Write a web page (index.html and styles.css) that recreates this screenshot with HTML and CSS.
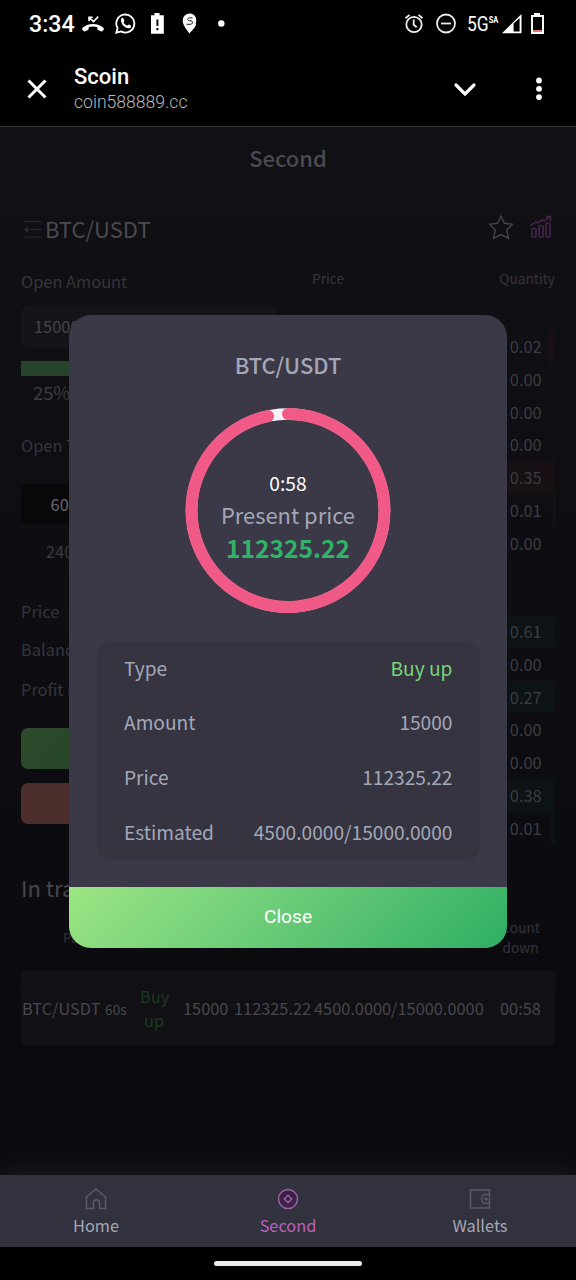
FILE: index.html
```html
<!DOCTYPE html>
<html lang="en">
<head>
<meta charset="utf-8">
<title>Scoin</title>
<link rel="stylesheet" href="styles.css">
</head>
<body>
<div class="phone">
  <header class="status">
    <span class="clock">3:34</span>
    <svg class="status-icons" width="150" height="30" viewBox="80 8 150 30">
      <path d="M82.500 30c-.6-1-.4-1.800.4-2.500 5.800-4.600 14.400-4.600 20.200 0 .8.700 1 1.500.4 2.500l-1.300 1.300c-.6.500-3.700-.8-4.600-1.500l-.4-2.600c-2.700-.9-5.700-.9-8.400 0l-.4 2.600c-.9.700-4 2-4.600 1.500z" fill="#fff"/>
      <path d="M89 21v-3.700h3.700M89.300 17.600l4.200 4 4.700-5" fill="none" stroke="#fff" stroke-width="1.600"/>
      <path d="M116.300 32.700l1.300-4.500a9 9 0 1 1 3.300 3.200z" fill="none" stroke="#fff" stroke-width="1.800"/>
      <path d="M121.500 18.300c.8-.700 1.600-.600 2 .2l.900 2c.2.600-.9 1.500-.8 1.900.7 1.400 1.900 2.500 3.400 3.100.6.200 1.200-1.300 1.800-1l2 1c.6.400.3 1.800-.4 2.300-3.600 2.600-11.600-4.500-8.900-9.500z" fill="#fff"/>
      <path d="M151 15.200h3.500V13h5v2.200h4.300v18.500H151z" fill="#fff"/>
      <path d="M157.400 19.500v6.500M157.400 28v2.300" stroke="#000" stroke-width="1.900"/>
      <path d="M189.300 33.700c-1.600-3.700-6.500-7.500-6.500-13 0-4.300 3.200-7.200 6.800-7.200 3.700 0 6.600 2.600 6.600 6.200v3h-2l2 .9c0 3.500-5 7.700-6.900 10.100z" fill="#fff"/>
      <path d="M192.500 17.800h-3c-2.300 0-2.400 3 0 3h1.500c2 0 2 3.500-.5 3.500h-4" fill="none" stroke="#000" stroke-width=".9"/>
      <circle cx="221.300" cy="23.500" r="3.200" fill="#fff"/>
    </svg>
    <span class="spring"></span>
    <svg width="54" height="26" viewBox="403 11 54 26" fill="none" stroke="#eee" stroke-width="1.800">
      <circle cx="414" cy="24.500" r="7.700"/><path d="M413.700 19.500v5.300l3 2.500M405.500 18.300l4-3.400M422.500 18.300l-4-3.400"/>
      <circle cx="446" cy="23.500" r="9"/><path d="M441 23.500h10"/>
    </svg>
    <span class="net">5G<sup>SA</sup></span>
    <svg width="44" height="26" viewBox="501 11 44 26">
      <path d="M502 33.200L521.500 14v19.200z" fill="#fff"/><path d="M513.600 23.500l6-5.500v13.500h-6z" fill="#000"/>
      <path d="M531 15h3v-2h6v2h4v19h-13z" fill="#fff"/><path d="M533 17h9v13h-9z" fill="#000"/><path d="M533 30h9v2h-9z" fill="#e8786c"/>
    </svg>
  </header>

  <header class="browser">
    <svg class="close-x" width="22" height="22" viewBox="0 0 22 22"><path d="M2.500 2.500l17 17m0-17l-17 17" stroke="#fff" stroke-width="3"/></svg>
    <div class="site"><b>Scoin</b><span>coin588889.cc</span></div>
    <svg width="24" height="16" viewBox="0 0 24 16"><path d="M3 4l9 9 9-9" fill="none" stroke="#fff" stroke-width="3.200" stroke-linecap="round"/></svg>
    <svg class="dots" width="8" height="24" viewBox="0 0 8 24" fill="#fff"><circle cx="4" cy="3.500" r="2.900"/><circle cx="4" cy="11.800" r="2.900"/><circle cx="4" cy="20.100" r="2.900"/></svg>
  </header>

  <main class="page">
    <h1>Second</h1>
    <div class="pair">
      <svg width="22" height="20" viewBox="0 0 22 20" fill="none" stroke="#33203a"><path d="M1 2.500h18M6 10.500h13M1 18h18"/><path d="M4.500 7.500L1.500 10.500l3 3z" fill="#33203a"/></svg>
      <span>BTC/USDT</span>
      <svg class="star" width="28" height="26" viewBox="0 0 28 26"><path d="M14 2l3.400 7.300 8 1-5.700 5.700 1.700 8.200-7.400-3.600-7.400 3.600 1.700-8.200-5.700-5.700 8-1z" fill="none" stroke="#444349" stroke-width="1.400"/></svg>
      <svg width="24" height="26" viewBox="0 0 24 26" fill="none" stroke="#432449" stroke-width="1.700"><rect x="3" y="14.500" width="4" height="8.500" rx="1"/><rect x="10" y="11.500" width="4" height="11.500" rx="1"/><rect x="17" y="9" width="4" height="14" rx="1"/><path d="M1.500 11.500l5-3.300 3 .5 3.800-3 2 1.300 5.500-4.500M17 2.500h4.500V7"/></svg>
    </div>

    <div class="trade">
      <section class="order">
        <p class="label first">Open Amount</p>
        <div class="field">15000</div>
        <div class="meter"></div>
        <div class="percent">25%</div>
        <p class="label time">Open Time</p>
        <div class="option chosen">60s</div>
        <div class="option">240s</div>
        <p class="label price">Price</p>
        <p class="label balance">Balance</p>
        <p class="label profit">Profit rate</p>
        <div class="action up"></div>
        <div class="action down"></div>
      </section>
      <section class="book">
        <div class="book-head"><span>Price</span><span>Quantity</span></div>
        <div class="levels asks">
          <div class="w7">0.02</div><div>0.00</div><div>0.00</div><div>0.00</div><div class="full">0.35</div><div class="w2">0.01</div><div>0.00</div>
        </div>
        <div class="levels bids">
          <div class="full">0.61</div><div>0.00</div><div class="full">0.27</div><div>0.00</div><div>0.00</div><div class="full">0.38</div><div class="w4">0.01</div>
        </div>
      </section>
    </div>

    <h2>In transaction</h2>
    <div class="orders-head"><span>Pair</span><span>Count<br>down</span></div>
    <div class="orders-row">
      <span class="c1">BTC/USDT <small>60s</small></span><span class="c2">Buy<br>up</span><span class="c3">15000</span><span class="c4">112325.22</span><span class="c5">4500.0000/15000.0000</span><span class="c6">00:58</span>
    </div>
  </main>

  <nav class="tabs">
    <a><svg width="24" height="24" viewBox="0 0 24 24"><path d="M2.500 10L12 2l9.500 8v11.500h-6V16c0-4.300-6-4.300-6 0v5.500h-7z"/></svg>Home</a>
    <a class="on"><svg width="24" height="24" viewBox="0 0 24 24"><circle cx="12" cy="12" r="9.500"/><path d="M12 8.300l3.700 3.700-3.700 3.700L8.300 12z"/></svg>Second</a>
    <a><svg width="24" height="24" viewBox="0 0 24 24"><path d="M2.500 3h19v18h-19zM21.500 7.500H18a4.500 4.500 0 0 0 0 9h3.500"/><circle cx="18" cy="12" r="1"/></svg>Wallets</a>
  </nav>
  <footer class="gesture"><i></i></footer>

  <div class="modal">
    <h3>BTC/USDT</h3>
    <div class="ring">
      <svg width="206" height="206" viewBox="0 0 206 206" fill="none" stroke-width="12">
        <circle cx="103" cy="102.500" r="96.500" stroke="#f5f3f7" stroke-width="11.400"/>
        <path d="M103 6A96.500 96.500 0 1 1 82.940 8.110" stroke="#f15a87" stroke-linecap="round"/>
      </svg>
      <div class="ring-text"><span class="left">0:58</span><span class="caption">Present price</span><b>112325.22</b></div>
    </div>
    <dl>
      <div><dt>Type</dt><dd class="green">Buy up</dd></div>
      <div><dt>Amount</dt><dd>15000</dd></div>
      <div><dt>Price</dt><dd>112325.22</dd></div>
      <div><dt>Estimated</dt><dd>4500.0000/15000.0000</dd></div>
    </dl>
    <button>Close</button>
  </div>
</div>
</body>
</html>
```
FILE: styles.css
```css
* { box-sizing: border-box; margin: 0; padding: 0; }
body { background: #000; }
svg { display: block; flex: none; }
.phone { position: relative; width: 576px; height: 1280px; overflow: hidden; display: flex; flex-direction: column; background: #000; color: #45444a; font-family: "Noto Sans CJK SC", "Noto Sans", sans-serif; }

.status { height: 48px; display: flex; align-items: center; padding: 0 31px 0 29px; color: #fff; font-family: Roboto, sans-serif; }
.clock { width: 51px; font-size: 23.200px; font-weight: 500; line-height: 48px; white-space: nowrap; }
.status-icons { margin-top: -2px; }
.spring { flex: 1; }
.net { width: 44px; padding-left: 12px; font-size: 21px; line-height: 48px; white-space: nowrap; transform: scaleX(.83); transform-origin: left; }
.net sup { font-size: 9px; font-weight: 700; line-height: 0; vertical-align: 8px; }

.browser { height: 79px; display: flex; align-items: center; padding: 0 33px 0 26px; border-bottom: 1px solid #38373a; color: #fff; font-family: Roboto, sans-serif; }
.site { flex: 1; display: flex; flex-direction: column; padding-left: 26px; margin-top: 4px; }
.site b { font-size: 22px; font-weight: 500; line-height: 26px; }
.site span { font-size: 17.600px; font-weight: 300; line-height: 25px; color: #b8b8b8; }
.browser > svg { margin-top: 3px; }
.browser .dots { margin-left: 58px; }

.page { flex: none; height: 1048px; padding: 0 21px; background: linear-gradient(#111015, #0b0b0f 90%); }
h1 { height: 62px; line-height: 61px; font-size: 21.900px; font-weight: 500; text-align: center; color: #4b4a50; }
.pair { height: 80px; display: flex; align-items: center; padding: 0 2px 0 2px; font-size: 22px; line-height: 34px; color: #4b4a50; }
.pair span { margin-top: -2px; }
.pair .star { margin: -4px 14px 0 auto; }
.pair .star + svg { margin-top: -4px; }
.trade { height: 577px; display: flex; justify-content: space-between; }
.order { width: 256px; }
.label { font-size: 16.400px; line-height: 25px; padding-bottom: 1px; color: #36353b; }
.field { height: 41px; margin: 11px 0 14px; padding-left: 13px; border-radius: 7px; background: #15141a; font-size: 16.400px; line-height: 41px; }
.meter { height: 15px; background: #25442b; }
.percent { padding-left: 12px; font-size: 18.300px; line-height: 33px; padding-bottom: 1px; color: #3d3c42; }
.time { margin: 23px 0 25px; }
.option { width: 85px; height: 40px; margin-bottom: 7px; border: 1px solid #0b0b0e; border-radius: 4px; font-size: 16.400px; line-height: 38px; text-align: center; color: #3b3a40; }
.chosen { background: #08080a; color: #69686e; }
.price { margin-top: 28px; }
.balance { margin-top: 12px; }
.profit { margin: 14px 0 25px; }
.action { height: 41px; margin-bottom: 14px; border-radius: 7px; }
.up { background: linear-gradient(135deg, #2e4b2b, #143c24); }
.down { background: #4b2d2b; }
.book { width: 243px; }
.book-head { display: flex; justify-content: space-between; height: 61px; font-size: 13.700px; line-height: 19px; color: #36353b; }
.levels div { height: 32.800px; padding-right: 13.500px; font-size: 16.300px; line-height: 32px; text-align: right; color: #3d3c42; background-repeat: no-repeat; background-position: right; background-size: 0 100%; }
.asks div { background-image: linear-gradient(#171015, #171015); }
.bids div { background-image: linear-gradient(#0d1215, #0d1215); }
.bids { margin-top: 55.400px; }
.levels .full { background-size: 100% 100%; }
.levels .w7 { background-size: 7px 100%; }
.levels .w4 { background-size: 4px 100%; }
.levels .w2 { background-size: 2px 100%; }
h2 { height: 72px; padding-top: 25px; font-size: 22px; line-height: 33px; font-weight: 400; color: #48474d; }
.orders-head { height: 53px; display: flex; justify-content: space-between; align-items: center; padding: 0 15px 16px 42px; font-size: 13.700px; line-height: 20px; color: #333238; text-align: center; }
.orders-row { height: 74px; display: flex; align-items: center; background: #111015; border-radius: 2px; font-size: 16.350px; line-height: 24px; white-space: nowrap; color: #48474d; }
.orders-row small { font-size: 13.700px; margin-left: 1px; }
.c1 { width: 119px; padding-left: 1px; }
.c2 { width: 43px; text-align: center; padding-right: 15px; color: #1d3823; }
.c3 { width: 51px; }
.c4 { width: 80px; }
.c5 { width: 186px; }

.tabs { position: relative; height: 72px; flex: none; display: flex; background: #32313e; box-shadow: 0 0 30px #202026; }
.tabs a { flex: 1; display: flex; flex-direction: column; align-items: center; padding-top: 12px; font-size: 16.350px; line-height: 28px; color: #a4a7b7; }
.tabs svg { fill: none; stroke: #5b5a67; stroke-width: 1.500; }
.tabs .on { color: #bd60bd; }
.tabs .on svg { stroke: #9c609f; }
.tabs .on circle { fill: #3d2149; }
.gesture { position: relative; flex: 1; background: #000; display: flex; justify-content: center; padding-top: 14px; }
.gesture i { width: 148px; height: 5px; border-radius: 3px; background: #ececec; }

.modal { position: absolute; left: 69px; top: 315px; width: 438px; height: 632.500px; display: flex; flex-direction: column; border-radius: 22px; overflow: hidden; background: #3b3947; color: #a3a7b8; }
h3 { height: 93px; line-height: 99px; text-align: center; font-size: 21.900px; font-weight: 500; }
.ring { display: grid; justify-content: center; height: 232.500px; }
.ring > * { grid-area: 1 / 1; }
.ring-text { display: flex; flex-direction: column; align-items: center; padding-top: 60px; white-space: nowrap; }
.left { font-size: 19.200px; line-height: 31px; color: #fff; }
.caption { font-size: 21.900px; line-height: 31px; }
.ring-text b { font-size: 24.600px; line-height: 34px; color: #31b269; }
dl { height: 219px; margin: 0 27px 27.500px 28px; padding: 0 27.500px 0 27px; border-radius: 14px; background: #353440; font-size: 19.150px; }
dl div { display: flex; justify-content: space-between; line-height: 54.800px; }
dd.green { color: #78d57a; }
button { flex: 1; border: 0; background: linear-gradient(135deg, #9de583, #69cb78 48%, #2eae64); color: #fff; font: 400 19.200px/60px Roboto, sans-serif; }
```
